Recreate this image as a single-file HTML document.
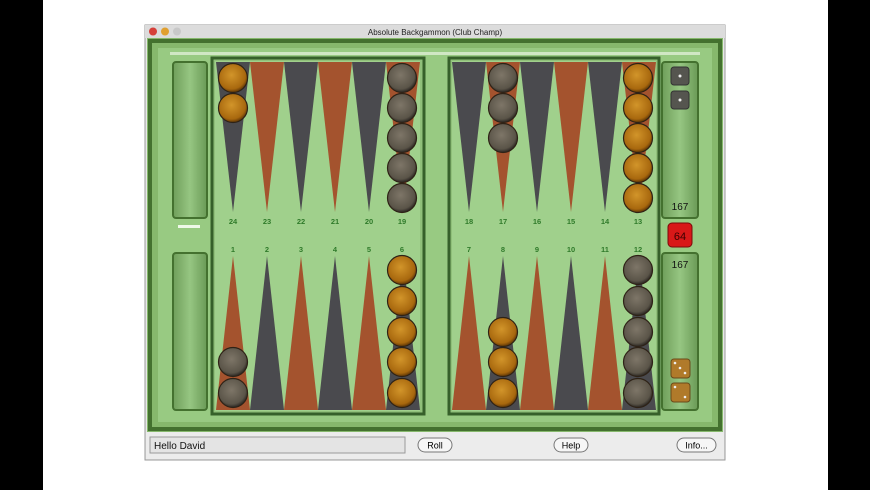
<!DOCTYPE html>
<html><head><meta charset="utf-8"><style>
body{margin:0;width:870px;height:490px;background:#fff;overflow:hidden;font-family:"Liberation Sans",sans-serif}
</style></head><body>
<svg width="870" height="490" viewBox="0 0 870 490" xmlns="http://www.w3.org/2000/svg" font-family="Liberation Sans, sans-serif">
<defs>
<radialGradient id="or" cx="0.45" cy="0.4" r="0.6"><stop offset="0" stop-color="#d2952a"/><stop offset="0.8" stop-color="#a8680e"/><stop offset="1" stop-color="#5e3606"/></radialGradient>
<radialGradient id="dk" cx="0.45" cy="0.4" r="0.6"><stop offset="0" stop-color="#7e7668"/><stop offset="0.8" stop-color="#5a5448"/><stop offset="1" stop-color="#2a2622"/></radialGradient>
<linearGradient id="tray" x1="0" x2="1"><stop offset="0" stop-color="#6f9e5a"/><stop offset="0.5" stop-color="#96c682"/><stop offset="1" stop-color="#6a9a56"/></linearGradient>
</defs>
<rect x="0" y="0" width="43" height="490" fill="#000"/>
<rect x="828" y="0" width="42" height="490" fill="#000"/>
<rect x="145" y="25" width="580" height="435" fill="#e8e8e8" stroke="#999"/>
<rect x="145" y="25" width="580" height="13" fill="#dcdcdc"/>
<circle cx="153" cy="31.5" r="4" fill="#d6403a"/><circle cx="165" cy="31.5" r="4" fill="#e0a030"/><circle cx="177" cy="31.5" r="4" fill="#c8c8c8"/>
<text x="435" y="35" font-size="8" text-anchor="middle" fill="#222">Absolute Backgammon (Club Champ)</text>
<rect x="147" y="38" width="576" height="394" fill="#86b86c"/>
<rect x="150" y="41" width="570" height="388" fill="none" stroke="#44712f" stroke-width="4"/>
<rect x="158" y="48" width="554" height="374" fill="#98ca82"/>
<rect x="170" y="52" width="530" height="3" fill="#e8f4e0" opacity=".7"/>
<rect x="212" y="58" width="212" height="356" fill="#90c07a" stroke="#36602a" stroke-width="3"/>
<rect x="215" y="61" width="205" height="350" fill="#a0d08c"/>
<rect x="449" y="58" width="210" height="356" fill="#90c07a" stroke="#36602a" stroke-width="3"/>
<rect x="452" y="61" width="204" height="350" fill="#a0d08c"/>
<rect x="173" y="62" width="34" height="156" rx="3" fill="url(#tray)" stroke="#44712f" stroke-width="2"/>
<rect x="173" y="253" width="34" height="157" rx="3" fill="url(#tray)" stroke="#44712f" stroke-width="2"/>
<rect x="662" y="62" width="36" height="156" rx="3" fill="url(#tray)" stroke="#44712f" stroke-width="2"/>
<rect x="662" y="253" width="36" height="157" rx="3" fill="url(#tray)" stroke="#44712f" stroke-width="2"/>
<rect x="178" y="225" width="22" height="3" fill="#eef8e8"/>
<g>
<polygon points="216,62 250,62 233,212" fill="#4a4a4e"/>
<polygon points="250,62 284,62 267,212" fill="#a4532e"/>
<polygon points="284,62 318,62 301,212" fill="#4a4a4e"/>
<polygon points="318,62 352,62 335,212" fill="#a4532e"/>
<polygon points="352,62 386,62 369,212" fill="#4a4a4e"/>
<polygon points="386,62 420,62 403,212" fill="#a4532e"/>
<polygon points="452,62 486,62 469,212" fill="#4a4a4e"/>
<polygon points="486,62 520,62 503,212" fill="#a4532e"/>
<polygon points="520,62 554,62 537,212" fill="#4a4a4e"/>
<polygon points="554,62 588,62 571,212" fill="#a4532e"/>
<polygon points="588,62 622,62 605,212" fill="#4a4a4e"/>
<polygon points="622,62 656,62 639,212" fill="#a4532e"/>
<polygon points="216,410 250,410 233,256" fill="#a4532e"/>
<polygon points="250,410 284,410 267,256" fill="#4a4a4e"/>
<polygon points="284,410 318,410 301,256" fill="#a4532e"/>
<polygon points="318,410 352,410 335,256" fill="#4a4a4e"/>
<polygon points="352,410 386,410 369,256" fill="#a4532e"/>
<polygon points="386,410 420,410 403,256" fill="#4a4a4e"/>
<polygon points="452,410 486,410 469,256" fill="#a4532e"/>
<polygon points="486,410 520,410 503,256" fill="#4a4a4e"/>
<polygon points="520,410 554,410 537,256" fill="#a4532e"/>
<polygon points="554,410 588,410 571,256" fill="#4a4a4e"/>
<polygon points="588,410 622,410 605,256" fill="#a4532e"/>
<polygon points="622,410 656,410 639,256" fill="#4a4a4e"/>
</g>
<g font-size="7.5" font-weight="bold" fill="#2f7a2a" text-anchor="middle">
<text x="233" y="224">24</text><text x="267" y="224">23</text><text x="301" y="224">22</text><text x="335" y="224">21</text><text x="369" y="224">20</text><text x="402" y="224">19</text>
<text x="469" y="224">18</text><text x="503" y="224">17</text><text x="537" y="224">16</text><text x="571" y="224">15</text><text x="605" y="224">14</text><text x="638" y="224">13</text>
<text x="233" y="252">1</text><text x="267" y="252">2</text><text x="301" y="252">3</text><text x="335" y="252">4</text><text x="369" y="252">5</text><text x="402" y="252">6</text>
<text x="469" y="252">7</text><text x="503" y="252">8</text><text x="537" y="252">9</text><text x="571" y="252">10</text><text x="605" y="252">11</text><text x="638" y="252">12</text>
</g>
<g stroke="#2e2216" stroke-width="1.2">
<circle cx="233" cy="78" r="14.5" fill="url(#or)"/><circle cx="233" cy="108" r="14.5" fill="url(#or)"/>
<circle cx="402" cy="78" r="14.5" fill="url(#dk)"/><circle cx="402" cy="108" r="14.5" fill="url(#dk)"/><circle cx="402" cy="138" r="14.5" fill="url(#dk)"/><circle cx="402" cy="168" r="14.5" fill="url(#dk)"/><circle cx="402" cy="198" r="14.5" fill="url(#dk)"/>
<circle cx="233" cy="362" r="14.5" fill="url(#dk)"/><circle cx="233" cy="393" r="14.5" fill="url(#dk)"/>
<circle cx="402" cy="270" r="14.5" fill="url(#or)"/><circle cx="402" cy="301" r="14.5" fill="url(#or)"/><circle cx="402" cy="332" r="14.5" fill="url(#or)"/><circle cx="402" cy="362" r="14.5" fill="url(#or)"/><circle cx="402" cy="393" r="14.5" fill="url(#or)"/>
<circle cx="503" cy="78" r="14.5" fill="url(#dk)"/><circle cx="503" cy="108" r="14.5" fill="url(#dk)"/><circle cx="503" cy="138" r="14.5" fill="url(#dk)"/>
<circle cx="638" cy="78" r="14.5" fill="url(#or)"/><circle cx="638" cy="108" r="14.5" fill="url(#or)"/><circle cx="638" cy="138" r="14.5" fill="url(#or)"/><circle cx="638" cy="168" r="14.5" fill="url(#or)"/><circle cx="638" cy="198" r="14.5" fill="url(#or)"/>
<circle cx="503" cy="332" r="14.5" fill="url(#or)"/><circle cx="503" cy="362" r="14.5" fill="url(#or)"/><circle cx="503" cy="393" r="14.5" fill="url(#or)"/>
<circle cx="638" cy="270" r="14.5" fill="url(#dk)"/><circle cx="638" cy="301" r="14.5" fill="url(#dk)"/><circle cx="638" cy="332" r="14.5" fill="url(#dk)"/><circle cx="638" cy="362" r="14.5" fill="url(#dk)"/><circle cx="638" cy="393" r="14.5" fill="url(#dk)"/>
</g>
<rect x="671" y="67" width="18" height="18" rx="3" fill="#55554f" stroke="#333"/><circle cx="680" cy="76" r="1.5" fill="#eee"/>
<rect x="671" y="91" width="18" height="18" rx="3" fill="#55554f" stroke="#333"/><circle cx="680" cy="100" r="1.5" fill="#eee"/>
<rect x="671" y="359" width="19" height="19" rx="3" fill="#b07a2a" stroke="#6a4a1a"/><circle cx="675" cy="363" r="1.3" fill="#eee"/><circle cx="680" cy="368" r="1.3" fill="#eee"/><circle cx="685" cy="373" r="1.3" fill="#eee"/>
<rect x="671" y="383" width="19" height="19" rx="3" fill="#b07a2a" stroke="#6a4a1a"/><circle cx="675" cy="387" r="1.3" fill="#eee"/><circle cx="685" cy="397" r="1.3" fill="#eee"/>
<text x="680" y="210" font-size="10" text-anchor="middle" fill="#111">167</text>
<text x="680" y="268" font-size="10" text-anchor="middle" fill="#111">167</text>
<rect x="668" y="223" width="24" height="24" rx="4" fill="#d81818" stroke="#7a0a0a"/>
<text x="680" y="240" font-size="11" text-anchor="middle" fill="#3a0000">64</text>
<rect x="146" y="432" width="578" height="27" fill="#ececec"/>
<rect x="150" y="437" width="255" height="16" fill="#e4e4e4" stroke="#9a9a9a"/>
<text x="154" y="449" font-size="10" fill="#111">Hello David</text>
<rect x="418" y="438" width="34" height="14" rx="7" fill="#f6f6f6" stroke="#777"/><text x="435" y="448.5" font-size="9" text-anchor="middle">Roll</text>
<rect x="554" y="438" width="34" height="14" rx="7" fill="#f6f6f6" stroke="#777"/><text x="571" y="448.5" font-size="9" text-anchor="middle">Help</text>
<rect x="677" y="438" width="39" height="14" rx="7" fill="#f6f6f6" stroke="#777"/><text x="696.5" y="448.5" font-size="9" text-anchor="middle">Info...</text>
</svg>
</body></html>
